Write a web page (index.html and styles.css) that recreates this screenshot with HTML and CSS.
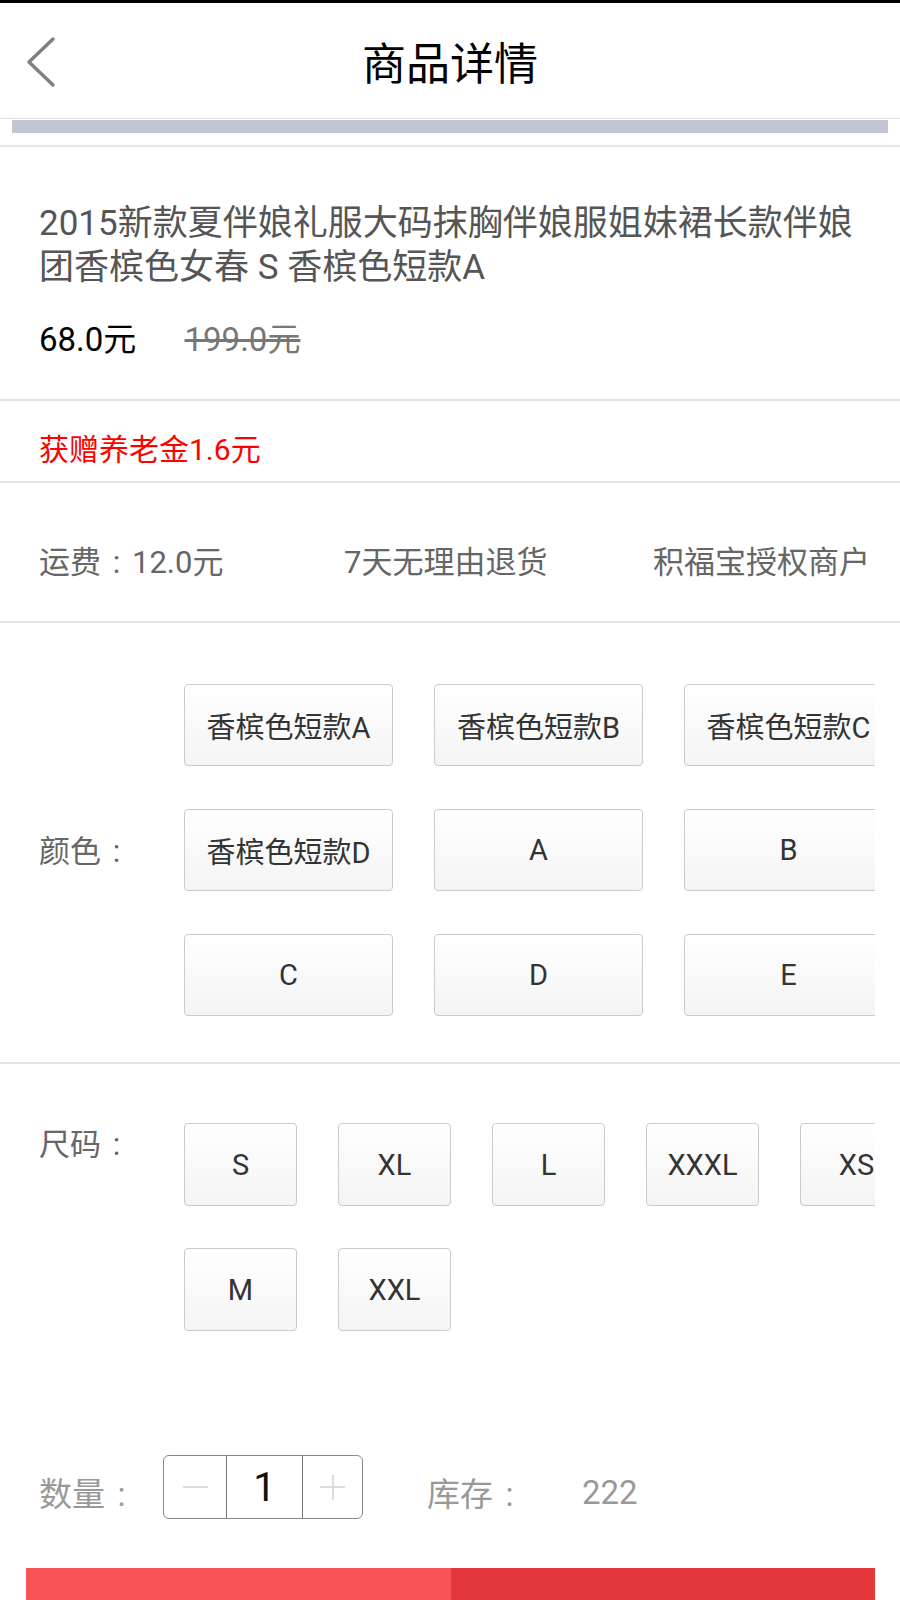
FILE: index.html
```html
<!DOCTYPE html>
<html lang="zh-CN">
<head>
  <meta charset="UTF-8">
  <title>商品详情</title>
  <link rel="stylesheet" href="styles.css">
</head>
<body>
  <div class="statusbar"></div>

  <div class="topbar">
    <div class="back">
      <svg width="30" height="52" viewBox="0 0 30 52">
        <polyline points="27,3 3,26 27,49" fill="none" stroke="#808080" stroke-width="3.5" stroke-linecap="round" stroke-linejoin="round"/>
      </svg>
    </div>
    <h1 class="title">商品详情</h1>
    <div></div>
  </div>

  <div class="banner">
    <div class="banner-img"></div>
  </div>

  <div class="goods">
    <div class="goods-name">2015新款夏伴娘礼服大码抹胸伴娘服姐妹裙长款伴娘团香槟色女春 S 香槟色短款A</div>
    <div class="price-row">
      <span class="price">68.0元</span>
      <span class="old-price">199.0元</span>
    </div>
  </div>

  <div class="bonus">获赠养老金1.6元</div>

  <div class="service">
    <span>运费<span class="colon">:</span>12.0元</span>
    <span>7天无理由退货</span>
    <span>积福宝授权商户</span>
  </div>

  <div class="spec spec-color">
    <div class="spec-label">颜色<span class="colon">:</span></div>
    <div class="spec-options">
      <div class="color-grid">
        <div class="opt">香槟色短款A</div>
        <div class="opt">香槟色短款B</div>
        <div class="opt">香槟色短款C</div>
        <div class="opt">香槟色短款D</div>
        <div class="opt">A</div>
        <div class="opt">B</div>
        <div class="opt">C</div>
        <div class="opt">D</div>
        <div class="opt">E</div>
      </div>
    </div>
  </div>

  <div class="spec spec-size">
    <div class="spec-label">尺码<span class="colon">:</span></div>
    <div class="spec-options">
      <div class="size-grid">
        <div class="opt">S</div>
        <div class="opt">XL</div>
        <div class="opt">L</div>
        <div class="opt">XXXL</div>
        <div class="opt">XS</div>
        <div class="opt">M</div>
        <div class="opt">XXL</div>
      </div>
    </div>
  </div>

  <div class="qty">
    <span class="qty-label">数量<span class="colon">:</span></span>
    <div class="stepper">
      <div class="step minus"><span class="bar-h"></span></div>
      <div class="step count">1</div>
      <div class="step plus"><span class="bar-h"></span><span class="bar-v"></span></div>
    </div>
    <span class="stock-label">库存<span class="colon">:</span></span>
    <span class="stock">222</span>
  </div>

  <div class="buy">
    <div class="buy-cart"></div>
    <div class="buy-now"></div>
  </div>
</body>
</html>
```

FILE: styles.css
```css
body {
  margin: 0;
  width: 900px;
  background-color: #fff;
  font-family: "Roboto", "Noto Sans CJK SC", sans-serif;
  overflow: hidden;
}

/* full-width colon, centred in its cell like on the device */
.colon {
  display: inline-block;
  width: 1em;
  text-align: center;
}

.statusbar {
  height: 3px;
  background-color: #000;
}

.topbar {
  height: 115px;
  display: grid;
  grid-template-columns: 1fr auto 1fr;
  align-items: center;
  border-bottom: 1px solid #dedede;
}

.back {
  padding-left: 26px;
  padding-top: 2px;
  display: flex;
  align-items: center;
}

.title {
  margin: 0;
  font-size: 44px;
  font-weight: normal;
  color: #000;
}

.banner {
  padding: 1px 12px 12px;
  border-bottom: 2px solid #e6e6e6;
}

.banner-img {
  height: 13px;
  background-color: #c2c6d2;
}

.goods {
  padding: 55px 30px 37px 39px;
  border-bottom: 2px solid #e4e4e4;
}

.goods-name {
  font-size: 35px;
  line-height: 44px;
  color: #555;
}

.price-row {
  margin-top: 28px;
  line-height: 44px;
  font-size: 33px;
}

.price {
  color: #000;
}

.old-price {
  margin-left: 40px;
  color: #777;
  text-decoration: line-through;
}

.bonus {
  padding: 29px 39px 11px;
  font-size: 30px;
  line-height: 40px;
  color: #ff0000;
  border-bottom: 2px solid #e4e4e4;
}

.service {
  display: grid;
  grid-template-columns: 305px 309px auto;
  padding: 60px 30px 38px 39px;
  font-size: 31px;
  line-height: 40px;
  color: #666;
  white-space: nowrap;
  border-bottom: 2px solid #e4e4e4;
}

.spec {
  display: flex;
  padding-left: 39px;
}

.spec-color {
  align-items: center;
  padding-top: 61px;
  padding-bottom: 46px;
  border-bottom: 2px solid #e4e4e4;
}

.spec-color .spec-label {
  padding-top: 4px;
}

.spec-size {
  align-items: flex-start;
  padding-top: 59px;
  padding-bottom: 124px;
}

.spec-size .spec-label {
  padding-top: 2px;
}

.spec-label {
  width: 145px;
  flex-shrink: 0;
  font-size: 31px;
  line-height: 40px;
  color: #666;
}

.spec-options {
  width: 691px;
  overflow: hidden;
}

.color-grid {
  display: grid;
  grid-template-columns: repeat(3, 209px);
  grid-auto-rows: 82px;
  column-gap: 41px;
  row-gap: 43px;
}

.size-grid {
  display: grid;
  grid-template-columns: repeat(5, 113px);
  grid-auto-rows: 83px;
  column-gap: 41px;
  row-gap: 42px;
}

.opt {
  display: flex;
  align-items: center;
  justify-content: center;
  box-sizing: border-box;
  border: 1px solid #c8cbd2;
  border-radius: 4px;
  background: linear-gradient(#ffffff, #f4f4f4);
  font-size: 29px;
  color: #333;
  white-space: nowrap;
}

.qty {
  display: flex;
  align-items: center;
  height: 64px;
  padding-left: 39px;
  font-size: 33px;
  color: #999;
}

.qty-label,
.stock-label,
.stock {
  padding-top: 10px;
}

.qty-label {
  width: 124px;
}

.stepper {
  display: flex;
  width: 200px;
  height: 64px;
  box-sizing: border-box;
  border: 1px solid #888;
  border-radius: 6px;
}

.step {
  position: relative;
  display: flex;
  align-items: center;
  justify-content: center;
}

.minus {
  width: 62px;
}

.count {
  width: 75px;
  border-left: 1px solid #777;
  border-right: 1px solid #777;
  font-size: 40px;
  color: #111;
}

.plus {
  flex: 1;
}

.bar-h {
  width: 25px;
  height: 2px;
  background-color: #ddd;
}

.bar-v {
  position: absolute;
  width: 2px;
  height: 25px;
  background-color: #ddd;
}

.stock-label {
  margin-left: 64px;
}

.stock {
  margin-left: 56px;
}

.buy {
  display: flex;
  height: 32px;
  margin: 49px 25px 0 26px;
}

.buy-cart {
  flex: 1;
  background-color: #f85355;
}

.buy-now {
  flex: 1;
  background-color: #e4373c;
}
```
